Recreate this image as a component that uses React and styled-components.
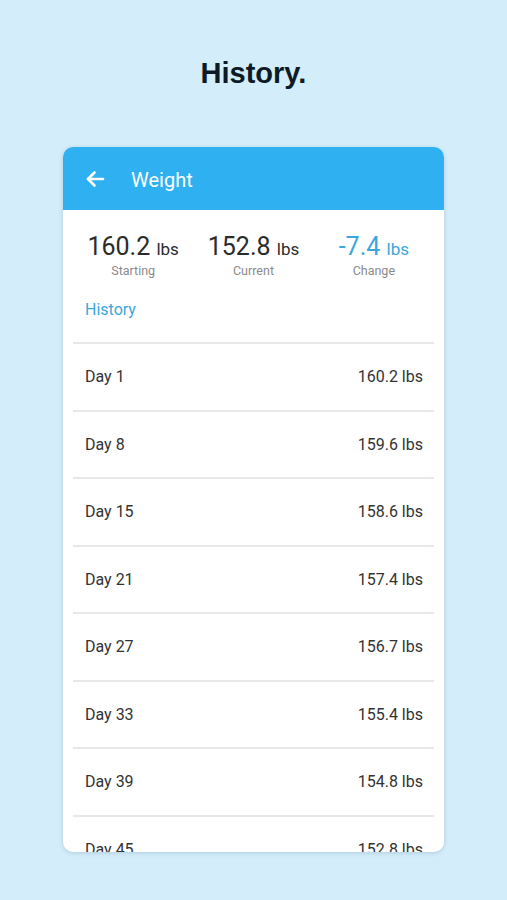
import styled, { createGlobalStyle } from "styled-components";

const entries = [
  { day: "Day 1", weight: "160.2 lbs" },
  { day: "Day 8", weight: "159.6 lbs" },
  { day: "Day 15", weight: "158.6 lbs" },
  { day: "Day 21", weight: "157.4 lbs" },
  { day: "Day 27", weight: "156.7 lbs" },
  { day: "Day 33", weight: "155.4 lbs" },
  { day: "Day 39", weight: "154.8 lbs" },
  { day: "Day 45", weight: "152.8 lbs" },
];

const stats = [
  { value: "160.2", label: "Starting" },
  { value: "152.8", label: "Current" },
  { value: "-7.4", label: "Change", accent: true },
];

export default function App() {
  return (
    <>
      <GlobalStyle />
      <Page>
        <Title>History.</Title>
        <Card>
          <Header>
            <svg width="20" height="20" viewBox="0 0 20 20" fill="none" stroke="#fff" strokeWidth="2.6" strokeLinecap="round" strokeLinejoin="round">
              <path d="M18 10H3" />
              <path d="M9.5 16.5L3 10l6.5-6.5" />
            </svg>
            <HeaderTitle>Weight</HeaderTitle>
          </Header>
          <Body>
            <StatsRow>
              {stats.map(s => (
                <Stat key={s.label}>
                  <StatValue $accent={s.accent}>
                    {s.value} <Unit>lbs</Unit>
                  </StatValue>
                  <StatLabel>{s.label}</StatLabel>
                </Stat>
              ))}
            </StatsRow>
            <SectionLink>History</SectionLink>
            <List>
              {entries.map(e => (
                <Row key={e.day}>
                  <span>{e.day}</span>
                  <span>{e.weight}</span>
                </Row>
              ))}
            </List>
          </Body>
        </Card>
      </Page>
    </>
  );
}

const GlobalStyle = createGlobalStyle`
  body {
    margin: 0;
    background: #d4edfa;
    font-family: Roboto, "Noto Sans", sans-serif;
  }
`;

const Page = styled.div`
  width: 507px;
  height: 900px;
  display: flex;
  flex-direction: column;
  align-items: center;
  background: #d4edfa;
  overflow: hidden;
`;

const Title = styled.h1`
  margin: 56px 0 57px;
  font-family: "Liberation Sans", Arial, sans-serif;
  font-size: 29px;
  line-height: 34px;
  font-weight: 700;
  color: #0c1b27;
`;

const Card = styled.div`
  width: 381px;
  height: 705px;
  background: #fff;
  border-radius: 10px;
  overflow: hidden;
  box-shadow: 0 1px 4px rgba(60, 110, 140, 0.25);
`;

const Header = styled.div`
  height: 63px;
  background: #2fb0f0;
  display: flex;
  align-items: center;
  padding-left: 22px;
  gap: 26px;
`;

const HeaderTitle = styled.span`
  color: #fff;
  font-size: 20px;
  font-weight: 400;
  margin-top: 2px;
`;

const Body = styled.div`
  padding: 0 10px;
`;

const StatsRow = styled.div`
  display: grid;
  grid-template-columns: repeat(3, 1fr);
  padding-top: 22px;
`;

const Stat = styled.div`
  display: flex;
  flex-direction: column;
  align-items: center;
`;

const StatValue = styled.div`
  font-size: 25px;
  line-height: 30px;
  color: ${p => (p.$accent ? "#3aa7dc" : "#2b2b2b")};
`;

const Unit = styled.span`
  font-size: 17px;
`;

const StatLabel = styled.div`
  font-size: 12.5px;
  line-height: 14px;
  color: #8a8a8a;
`;

const SectionLink = styled.div`
  margin: 22px 0 0 12px;
  font-size: 16px;
  line-height: 20px;
  color: #3aa7dc;
`;

const List = styled.div`
  margin-top: 22px;
`;

const Row = styled.div`
  height: 65.5px;
  border-top: 2px solid #e8e8e8;
  display: flex;
  align-items: center;
  justify-content: space-between;
  padding: 0 11px 0 12px;
  font-size: 16px;
  color: #333;
`;
